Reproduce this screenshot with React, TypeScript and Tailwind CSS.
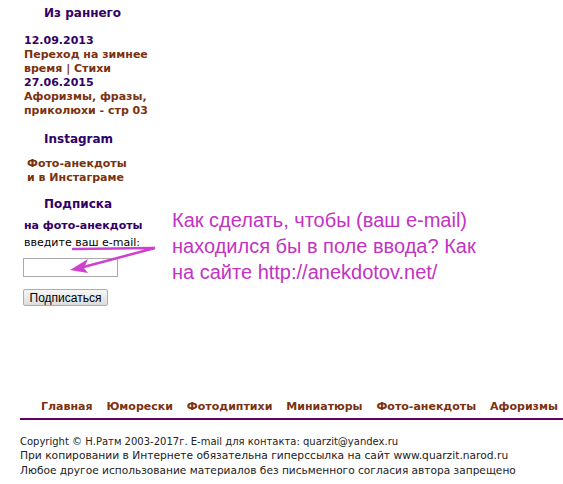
import React from 'react';

const recent = [
  { date: '12.09.2013', title: ['Переход на зимнее', 'время | Стихи'] },
  { date: '27.06.2015', title: ['Афоризмы, фразы,', 'приколюхи - стр 03'] },
];

const nav = ['Главная', 'Юморески', 'Фотодиптихи', 'Миниатюры', 'Фото-анекдоты', 'Афоризмы'];

export default function App() {
  return (
    <div className="relative w-[563px] h-[484px] bg-white overflow-hidden font-['DejaVu_Sans',sans-serif]">
      {/* Sidebar */}
      <div className="w-[170px] pl-[24px] pt-[6px]">
        <h3 className="pl-[20px] text-[12px] font-bold leading-[14px] text-[#330066]">Из раннего</h3>
        <div className="mt-[14px]">
          {recent.map((r) => (
            <div key={r.date}>
              <div className="text-[11px] font-bold leading-[14px] text-[#330066]">{r.date}</div>
              <a className="block text-[11px] font-bold leading-[14px] text-[#7a3210]">
                {r.title[0]}
                <br />
                {r.title[1]}
              </a>
            </div>
          ))}
        </div>

        <h3 className="mt-[14px] pl-[20px] text-[12px] font-bold leading-[14px] text-[#330066]">Instagram</h3>
        <a className="mt-[11px] ml-[3px] block text-[11px] font-bold leading-[14px] text-[#7a3210]">
          Фото-анекдоты
          <br />
          и в Инстаграме
        </a>

        <h3 className="mt-[12px] pl-[20px] text-[12px] font-bold leading-[14px] text-[#330066]">Подписка</h3>
        <div className="mt-[8px] text-[11px] font-bold leading-[14px] text-[#330066]">на фото-анекдоты</div>
        <div className="mt-[3px] text-[11px] leading-[14px] text-black">введите ваш e-mail:</div>
        <input
          type="text"
          className="mt-[8px] -ml-[1px] block w-[95px] h-[19px] border border-[#a9a9a9] bg-white"
        />
        <button className="mt-[12px] -ml-[1px] block h-[17px] w-[85px] border border-[#adadad] rounded-[2px] bg-gradient-to-b from-[#f6f6f6] to-[#dddddd] text-[12px] leading-[14px] text-black font-['Liberation_Sans',Arial,sans-serif]">
          Подписаться
        </button>
      </div>

      {/* Annotation overlay */}
      <div className="absolute left-[172px] top-[207px] text-[20px] leading-[26px] text-[#c333c3] font-['Liberation_Sans',Arial,sans-serif]">
        Как сделать, чтобы (ваш e-mail)
        <br />
        находился бы в поле ввода? Как
        <br />
        на сайте http://anekdotov.net/
      </div>
      <svg className="absolute left-0 top-0" width="563" height="484" viewBox="0 0 563 484">
        <g stroke="#d040d0" strokeWidth="2.5" fill="none" strokeLinecap="round">
          <path d="M73 249 L155 248 L76 269" />
        </g>
        <path d="M70 270 L88 259 L84 268 L88 273 Z" fill="#d040d0" />
      </svg>

      {/* Navigation */}
      <div className="ml-[20px] mt-[94px]">
        <div className="flex justify-between pl-[21px] pr-[5px] pb-[4px] border-b-2 border-[#660066]">
          {nav.map((n) => (
            <a key={n} className="text-[11px] font-bold leading-[14px] text-[#7a3210]">
              {n}
            </a>
          ))}
        </div>
        <div className="mt-[15px] leading-[14px] text-[#222]">
          <div className="text-[10px]">Copyright © Н.Ратм 2003-2017г. E-mail для контакта: quarzit@yandex.ru</div>
          <div className="text-[10.7px]">При копировании в Интернете обязательна гиперссылка на сайт www.quarzit.narod.ru</div>
          <div className="text-[10.6px]">Любое другое использование материалов без письменного согласия автора запрещено</div>
        </div>
      </div>
    </div>
  );
}
